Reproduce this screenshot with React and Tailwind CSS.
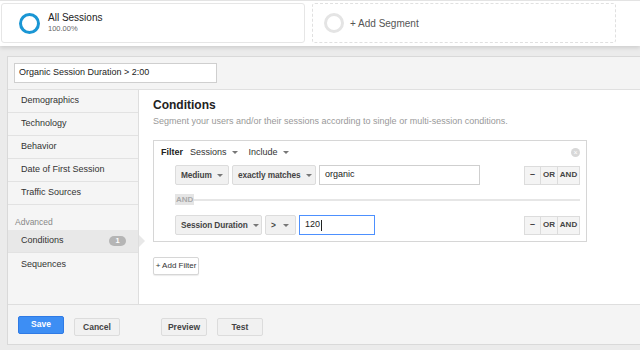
import React from "react";

function Caret() {
  return <span className="ml-[5px] inline-block h-0 w-0 shrink-0 border-x-[3px] border-t-[3px] border-x-transparent border-t-[#777]"></span>;
}

function Select({ label, w }) {
  return (
    <div className={`flex h-[20px] ${w} shrink-0 items-center justify-between overflow-hidden whitespace-nowrap rounded-[2px] border border-[#dcdcdc] bg-[#f1f1f1] pl-[5px] pr-[6px] text-[8.3px] font-bold tracking-[-0.1px] text-[#444]`}>
      <span>{label}</span>
      <Caret />
    </div>
  );
}

function OpButtons() {
  return (
    <div className="flex h-[19px] border border-[#dcdcdc] bg-[#f4f4f4] text-[8px] font-bold text-[#444]">
      <div className="flex w-[16px] items-center justify-center border-r border-[#dcdcdc] text-[9px]">–</div>
      <div className="flex w-[17px] items-center justify-center border-r border-[#dcdcdc]">OR</div>
      <div className="flex w-[21px] items-center justify-center">AND</div>
    </div>
  );
}

function Btn({ children, primary }) {
  return primary ? (
    <button className="h-[18px] w-[46px] rounded-[2px] border border-[#2f7ae5] bg-[#3d8ef4] text-[8.5px] font-bold text-white">{children}</button>
  ) : (
    <button className="h-[18px] w-[46px] rounded-[2px] border border-[#dcdcdc] bg-[#f1f1f1] text-[8.5px] font-bold text-[#444]">{children}</button>
  );
}

export default function App() {
  const nav = ["Demographics", "Technology", "Behavior", "Date of First Session", "Traffic Sources"];
  return (
    <div className="h-[350px] w-[640px] overflow-hidden bg-[#ebebeb] font-['Liberation_Sans',Arial,sans-serif] text-[#333]">
      {/* Segment bar */}
      <div className="flex h-[46px] gap-[7px] border-t border-[#e3e3e3] bg-white pl-[1px] pt-[2px] shadow-[0_2px_4px_rgba(0,0,0,0.12)]">
        <div className="flex h-[40px] w-[304px] items-center rounded-[3px] border border-[#e6e6e6] bg-white pl-[17px]">
          <div className="h-[21px] w-[21px] rounded-full border-[3px] border-[#1a96d4]"></div>
          <div className="ml-[8px] leading-none">
            <div className="text-[10px] text-[#222]">All Sessions</div>
            <div className="mt-[2px] text-[7.5px] text-[#666]">100.00%</div>
          </div>
        </div>
        <div className="flex h-[40px] w-[304px] items-center rounded-[3px] border border-dashed border-[#e0e0e0] bg-white pl-[11px]">
          <div className="h-[20px] w-[20px] rounded-full border-[3px] border-[#e4e4e4]"></div>
          <div className="ml-[6px] text-[10px] text-[#555]">+ Add Segment</div>
        </div>
      </div>

      {/* Editor panel */}
      <div className="ml-[7px] mt-[10px] flex h-[289px] flex-col border border-r-0 border-[#d9d9d9] bg-[#f4f4f4]">
        <div className="flex h-[33px] items-center border-b border-[#e0e0e0] pl-[6px]">
          <div className="flex h-[20px] w-[203px] items-center border border-[#cfcfcf] bg-white px-[4px] text-[9px] text-[#222]">
            Organic Session Duration &gt; 2:00
          </div>
        </div>
        <div className="flex flex-1">
          {/* Sidebar */}
          <div className="w-[131px] border-r border-[#dedede] bg-[#f5f5f5]">
            {nav.map((n) => (
              <div key={n} className="flex h-[23px] items-center border-b border-[#e2e2e2] pl-[13px] text-[9px] text-[#333]">
                {n}
              </div>
            ))}
            <div className="mt-[11px] pl-[7px] text-[8.5px] text-[#888]">Advanced</div>
            <div className="relative mt-[1px] flex h-[23px] items-center justify-between border-b border-[#e2e2e2] bg-[#e8e8e8] pl-[13px] pr-[12px] text-[9px] text-[#333]">
              <span>Conditions</span>
              <span className="flex h-[10px] w-[17px] items-center justify-center rounded-full bg-[#b5b5b5] text-[7.5px] font-bold text-white">1</span>
              <span className="absolute right-[-7px] top-[5px] h-0 w-0 border-y-[6px] border-l-[6px] border-y-transparent border-l-[#e8e8e8]"></span>
            </div>
            <div className="flex h-[23px] items-center pl-[13px] text-[9px] text-[#333]">Sequences</div>
          </div>

          {/* Content */}
          <div className="flex-1 bg-white pl-[14px] pt-[6px]">
            <div className="text-[12px] font-bold text-[#222]">Conditions</div>
            <div className="mt-[1px] text-[9px] text-[#999]">
              Segment your users and/or their sessions according to single or multi-session conditions.
            </div>
            <div className="mt-[11px] w-[434px] border border-[#d6d6d6] pb-[6px] pl-[7px] pr-[5px] pt-[5px]">
              <div className="flex items-center text-[9px]">
                <span className="font-bold text-[#222]">Filter</span>
                <span className="ml-[7px] flex items-center text-[#333]">Sessions<Caret /></span>
                <span className="ml-[11px] flex items-center text-[#333]">Include<Caret /></span>
                <span className="ml-auto mr-[1px] flex h-[9px] w-[9px] items-center justify-center rounded-full bg-[#d8d8d8] text-[7px] leading-none text-white">×</span>
              </div>
              <div className="mt-[6px] flex items-center pl-[14px] pr-[1px]">
                <Select label="Medium" w="w-[54px]" />
                <div className="ml-[3px]"><Select label="exactly matches" w="w-[84px]" /></div>
                <div className="ml-[3px] flex h-[20px] w-[161px] items-center border border-[#cfcfcf] px-[5px] text-[9px] text-[#222]">organic</div>
                <div className="ml-auto"><OpButtons /></div>
              </div>
              <div className="mt-[9px] flex items-center pl-[14px] pr-[1px]">
                <span className="bg-[#e5e5e5] px-[1px] text-[8px] font-bold leading-[11px] text-[#aaa]">AND</span>
                <span className="h-[2px] flex-1 bg-[#e6e6e6]"></span>
              </div>
              <div className="mt-[10px] flex items-center pl-[14px] pr-[1px]">
                <Select label="Session Duration" w="w-[87px]" />
                <div className="ml-[3px]"><Select label=">" w="w-[31px]" /></div>
                <div className="ml-[3px] flex h-[20px] w-[76px] items-center border border-[#4d90fe] px-[5px] text-[9px] text-[#222]">120<span className="ml-[1px] h-[11px] w-px bg-[#222]"></span></div>
                <div className="ml-auto"><OpButtons /></div>
              </div>
            </div>
            <button className="mt-[15px] h-[18px] w-[46px] whitespace-nowrap rounded-[2px] border border-[#d6d6d6] bg-white text-[8px] text-[#333] shadow-[0_1px_1px_rgba(0,0,0,0.08)]">+ Add Filter</button>
          </div>
        </div>

        {/* Footer */}
        <div className="flex h-[40px] items-center border-t border-[#dedede] bg-[#f4f4f4] pl-[10px]">
          <Btn primary>Save</Btn>
          <div className="ml-[10px]"><Btn>Cancel</Btn></div>
          <div className="ml-[41px]"><Btn>Preview</Btn></div>
          <div className="ml-[10px]"><Btn>Test</Btn></div>
        </div>
      </div>
    </div>
  );
}
